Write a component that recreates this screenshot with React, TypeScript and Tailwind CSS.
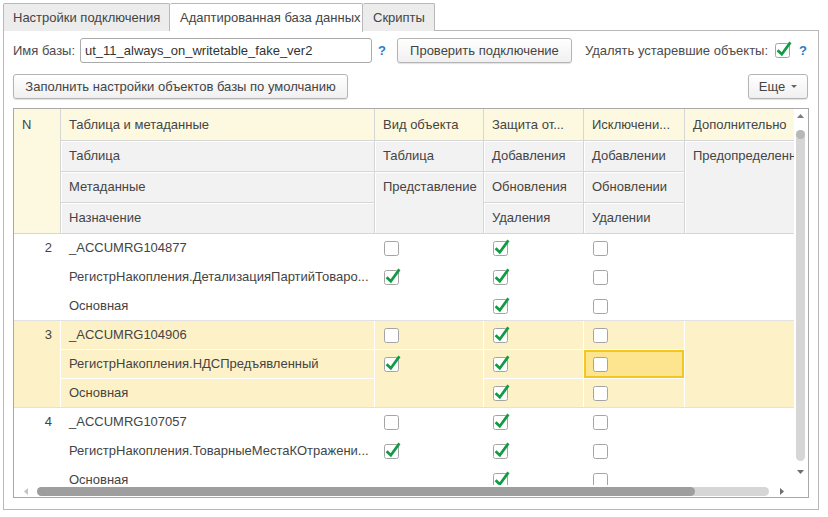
import React from 'react';

const font = { fontFamily: '"Liberation Sans", Arial, sans-serif' };

function Box({ checked }: { checked?: boolean }) {
  return (
    <svg width="15" height="15" viewBox="0 0 15 15" className="overflow-visible shrink-0">
      <rect x="0.5" y="0.5" width="14" height="14" rx="2" fill="#fff" stroke="#a4a4a4" />
      {checked && (
        <path d="M2.6 7.2 L6.8 11.3 L15.4 -0.6" fill="none" stroke="#129a44" strokeWidth="2.7" />
      )}
    </svg>
  );
}

function Button({ children, className = '' }: { children: React.ReactNode; className?: string }) {
  return (
    <div
      className={`h-[25px] flex items-center justify-center rounded-[3px] border border-[#b4b4b4] bg-gradient-to-b from-white to-[#f0f0f0] shadow-[0_1px_1px_rgba(0,0,0,0.12)] text-[13px] text-[#444] whitespace-nowrap ${className}`}
    >
      {children}
    </div>
  );
}

type Group = {
  n: number;
  table: string;
  meta: string;
  purpose: string;
  vid: [boolean, boolean];
  prot: [boolean, boolean, boolean];
  exc: [boolean, boolean, boolean];
  selected?: boolean;
};

const groups: Group[] = [
  {
    n: 2,
    table: '_ACCUMRG104877',
    meta: 'РегистрНакопления.ДетализацияПартийТоваро...',
    purpose: 'Основная',
    vid: [false, true],
    prot: [true, true, true],
    exc: [false, false, false],
  },
  {
    n: 3,
    table: '_ACCUMRG104906',
    meta: 'РегистрНакопления.НДСПредъявленный',
    purpose: 'Основная',
    vid: [false, true],
    prot: [true, true, true],
    exc: [false, false, false],
    selected: true,
  },
  {
    n: 4,
    table: '_ACCUMRG107057',
    meta: 'РегистрНакопления.ТоварныеМестаКОтражени...',
    purpose: 'Основная',
    vid: [false, true],
    prot: [true, true, true],
    exc: [false, false, false],
  },
];

const cols = 'grid-cols-[46px_313px_108px_99px_100px_109px]';
const rowsCls = ['row-start-1', 'row-start-2', 'row-start-3'];

function DataGroup({ g }: { g: Group }) {
  const bg = g.selected ? 'bg-[#fdf2c7]' : 'bg-white';
  return (
    <div className={`grid ${cols} grid-rows-[28px_28px_28px] gap-px bg-white border-b border-[#e2e2e2] shrink-0`}>
      <div className={`col-start-1 row-start-1 row-span-3 ${bg}`}>
        <div className="h-[28px] flex items-center justify-end pr-[8px]">{g.n}</div>
      </div>
      {[g.table, g.meta, g.purpose].map((t, i) => (
        <div key={i} className={`col-start-2 ${rowsCls[i]} ${bg} flex items-center pl-[8px] whitespace-nowrap overflow-hidden`}>
          {t}
        </div>
      ))}
      <div className={`col-start-3 row-start-1 ${bg} flex items-center pl-[9px]`}>
        <Box checked={g.vid[0]} />
      </div>
      <div className={`col-start-3 row-start-2 row-span-2 ${bg}`}>
        <div className="h-[28px] flex items-center pl-[9px]">
          <Box checked={g.vid[1]} />
        </div>
      </div>
      {g.prot.map((c, i) => (
        <div key={i} className={`col-start-4 ${rowsCls[i]} ${bg} flex items-center pl-[9px]`}>
          <Box checked={c} />
        </div>
      ))}
      {g.exc.map((c, i) =>
        g.selected && i === 1 ? (
          <div key={i} className={`col-start-5 ${rowsCls[i]} bg-[#fde48f] border-2 border-[#f5c61e] flex items-center pl-[7px]`}>
            <Box checked={c} />
          </div>
        ) : (
          <div key={i} className={`col-start-5 ${rowsCls[i]} ${bg} flex items-center pl-[9px]`}>
            <Box checked={c} />
          </div>
        )
      )}
      <div className={`col-start-6 row-start-1 row-span-3 ${bg}`} />
    </div>
  );
}

function Header() {
  const y = 'bg-[#fdf9e1]';
  const g = 'bg-[#f2f2f2] shadow-[inset_1px_1px_0_#fff]';
  const cell = 'h-[30px] flex items-center pl-[8px] whitespace-nowrap overflow-hidden';
  return (
    <div className={`grid ${cols} grid-rows-[31px_30px_30px_30px] gap-px bg-[#d6d6d6] border-b border-[#d6d6d6] shrink-0`}>
      <div className={`col-start-1 row-start-1 row-span-4 ${y}`}>
        <div className="h-[31px] flex items-center pl-[8px]">N</div>
      </div>
      <div className={`col-start-2 row-start-1 ${y} flex items-center pl-[8px]`}>Таблица и метаданные</div>
      <div className={`col-start-3 row-start-1 ${y} flex items-center pl-[8px]`}>Вид объекта</div>
      <div className={`col-start-4 row-start-1 ${y} flex items-center pl-[8px]`}>Защита от...</div>
      <div className={`col-start-5 row-start-1 ${y} flex items-center pl-[8px]`}>Исключени...</div>
      <div className={`col-start-6 row-start-1 ${y} flex items-center pl-[8px] overflow-hidden whitespace-nowrap`}>Дополнительно</div>

      <div className={`col-start-2 row-start-2 ${g} flex items-center pl-[8px]`}>Таблица</div>
      <div className={`col-start-2 row-start-3 ${g} flex items-center pl-[8px]`}>Метаданные</div>
      <div className={`col-start-2 row-start-4 ${g} flex items-center pl-[8px]`}>Назначение</div>

      <div className={`col-start-3 row-start-2 ${g} flex items-center pl-[8px]`}>Таблица</div>
      <div className={`col-start-3 row-start-3 row-span-2 ${g}`}>
        <div className={cell}>Представление</div>
      </div>

      <div className={`col-start-4 row-start-2 ${g} flex items-center pl-[8px]`}>Добавления</div>
      <div className={`col-start-4 row-start-3 ${g} flex items-center pl-[8px]`}>Обновления</div>
      <div className={`col-start-4 row-start-4 ${g} flex items-center pl-[8px]`}>Удаления</div>

      <div className={`col-start-5 row-start-2 ${g} flex items-center pl-[8px]`}>Добавлении</div>
      <div className={`col-start-5 row-start-3 ${g} flex items-center pl-[8px]`}>Обновлении</div>
      <div className={`col-start-5 row-start-4 ${g} flex items-center pl-[8px]`}>Удалении</div>

      <div className={`col-start-6 row-start-2 row-span-3 ${g} overflow-hidden`}>
        <div className={cell}>Предопределенные</div>
      </div>
    </div>
  );
}

function VScroll() {
  return (
    <div className="w-[14px] bg-white flex flex-col items-center">
      <svg width="7" height="4" className="mt-[5px] ml-[-1px]">
        <path d="M0 4 L3.5 0 L7 4 Z" fill="#7b7b7b" />
      </svg>
      <div className="mt-[12px] ml-[-1px] w-[9px] h-[331px] rounded-full bg-[#d6d6d6] flex flex-col">
        <div className="h-[9px] w-[9px] rounded-full bg-[#b8b8b8]" />
      </div>
      <svg width="7" height="4" className="mt-[9px] ml-[-1px]">
        <path d="M0 0 L7 0 L3.5 4 Z" fill="#6e6e6e" />
      </svg>
    </div>
  );
}

function HScroll() {
  return (
    <div className="h-[12px] flex items-center">
      <svg width="4" height="7" className="ml-[10px] shrink-0">
        <path d="M4 0 L4 7 L0 3.5 Z" fill="#c4c4c4" />
      </svg>
      <div className="ml-[9px] w-[732px] h-[9px] rounded-full bg-[#d6d6d6] flex">
        <div className="w-[658px] h-[9px] rounded-full bg-[#9e9e9e]" />
      </div>
      <svg width="4" height="7" className="ml-[11px] shrink-0">
        <path d="M0 0 L4 3.5 L0 7 Z" fill="#6e6e6e" />
      </svg>
    </div>
  );
}

export default function App() {
  return (
    <div className="w-[828px] h-[517px] bg-white text-[13px] text-[#444] overflow-hidden" style={font}>
      {/* tabs */}
      <div className="flex pl-[3px] pt-[3px] h-[31px] whitespace-nowrap">
        <div className="h-[28px] pl-[9px] flex items-center border border-[#b8b8b8] border-b-0 bg-[#ececec] w-[167px] rounded-t-[2px] overflow-hidden">
          Настройки подключения
        </div>
        <div className="h-[29px] pl-[10px] flex items-center border-t border-r border-[#b8b8b8] bg-white w-[193px] relative z-10 rounded-t-[2px]">
          Адаптированная база данных
        </div>
        <div className="h-[28px] pl-[10px] flex items-center border-t border-r border-[#b8b8b8] bg-[#ececec] w-[72px] rounded-t-[2px]">
          Скрипты
        </div>
      </div>

      {/* panel */}
      <div className="ml-[3px] mt-[-1px] w-[816px] h-[480px] border border-[#b8b8b8] flex flex-col">
        <div className="mt-[7px] h-[25px] flex items-center pl-[9px] pr-[11px] whitespace-nowrap">
          <div className="w-[67px] text-[#4b4b4b]">Имя базы:</div>
          <div className="w-[292px] h-[25px] border border-[#ababab] rounded-[3px] flex items-center pl-[4px] text-[#333]">
            ut_11_always_on_writetable_fake_ver2
          </div>
          <div className="ml-[6px] text-[#2b7bc7] font-bold">?</div>
          <Button className="ml-[11px] w-[175px]">Проверить подключение</Button>
          <div className="ml-auto flex items-center">
            <span className="text-[#4b4b4b]">Удалять устаревшие объекты:</span>
            <span className="ml-[7px] flex">
              <Box checked />
            </span>
            <span className="ml-[9px] text-[#2b7bc7] font-bold">?</span>
          </div>
        </div>

        <div className="mt-[11px] h-[25px] flex items-center pl-[9px] pr-[10px]">
          <Button className="w-[335px]">Заполнить настройки объектов базы по умолчанию</Button>
          <Button className="ml-auto w-[60px] gap-[6px]">
            <span>Еще</span>
            <svg width="6" height="3">
              <path d="M0 0 L6 0 L3 3 Z" fill="#666" />
            </svg>
          </Button>
        </div>

        {/* table */}
        <div className="mt-[9px] ml-[9px] w-[796px] h-[390px] border border-[#a8a8a8] flex flex-col">
          <div className="flex h-[376px]">
            <div className="w-[780px] flex flex-col overflow-hidden">
              <Header />
              <div className="flex flex-col overflow-hidden h-[251px]">
                {groups.map(g => (
                  <DataGroup key={g.n} g={g} />
                ))}
              </div>
            </div>
            <VScroll />
          </div>
          <HScroll />
        </div>
      </div>
    </div>
  );
}
